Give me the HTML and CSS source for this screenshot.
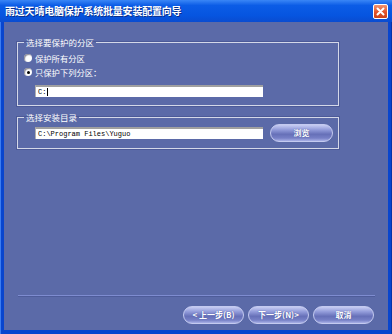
FILE: index.html
```html
<!DOCTYPE html>
<html>
<head>
<meta charset="utf-8">
<title>雨过天晴电脑保护系统批量安装配置向导</title>
<link rel="stylesheet" href="styles.css">
</head>
<body>
<div class="window">
	<div class="titlebar">
		<span class="title">雨过天晴电脑保护系统批量安装配置向导</span>
		<span class="close">
			<svg width="9" height="9" viewBox="0 0 9 9"><path d="M1.5 1.5L7.5 7.5M7.5 1.5L1.5 7.5" stroke="#fff" stroke-width="2" stroke-linecap="round"/></svg>
		</span>
	</div>
	<div class="client">
		<fieldset class="group group_part">
			<legend>选择要保护的分区</legend>
			<div class="radio_row"><span class="radio"></span>保护所有分区</div>
			<div class="radio_row"><span class="radio checked"></span>只保护下列分区：</div>
			<div class="input input_part">C:<span class="caret"></span></div>
		</fieldset>
		<fieldset class="group group_dir">
			<legend>选择安装目录</legend>
			<div class="dir_row">
				<div class="input">C:\Program Files\Yuguo</div>
				<span class="btn btn_browse">浏览</span>
			</div>
		</fieldset>
		<div class="spacer"></div>
		<div class="separator"></div>
		<div class="buttons">
			<span class="btn">&lt; 上一步(B)</span>
			<span class="btn">下一步(N)&gt;</span>
			<span class="btn">取消</span>
		</div>
	</div>
</div>
</body>
</html>
```
FILE: styles.css
```css
*{margin:0;padding:0;}
body{width:392px;height:334px;overflow:hidden;font-family:"Noto Sans CJK SC","Liberation Sans",sans-serif;}
.window{height:334px;display:flex;flex-direction:column;background:#0845CE;box-shadow:inset 1px 0 0 #3C7CF0,inset -1px 0 0 #0633A8;}
.titlebar{height:22px;display:flex;align-items:center;justify-content:space-between;padding:0 4px 0 5px;background:linear-gradient(#3A86F6,#0B5CE6 25%,#0655E0 70%,#0A4CD0);}
.title{color:#fff;font-size:10px;font-weight:bold;letter-spacing:-0.2px;text-shadow:1px 1px 0 #0A2E8A;line-height:12px;}
.close{width:13px;height:13px;border:1px solid #fff;border-radius:2px;background:linear-gradient(#F29470,#E2532A 55%,#C9421A);display:flex;align-items:center;justify-content:center;}
.client{flex:1;margin:0 4px 4px 4px;background:#5B6AA8;padding:15px 13px 6px 13px;display:flex;flex-direction:column;}
.group{width:322px;box-sizing:border-box;border:1px solid #D4D8E8;box-shadow:0 0 0 1px #4C5A98;padding:0 0 0 5px;color:#fff;}
.group legend{margin-left:1px;padding:0 2px;font-size:8.5px;line-height:10px;color:#fff;}
.group_part{padding-bottom:8px;}
.radio_row{height:14px;display:flex;align-items:center;font-size:8.3px;line-height:10px;}
.radio_row:first-of-type{margin-top:4px;}
.radio{width:8px;height:8px;border-radius:50%;background:radial-gradient(circle at 60% 60%,#fff 40%,#D0D0D8);box-shadow:inset 1px 1px 1px #8A8A96;margin:0 3px 0 1px;display:flex;align-items:center;justify-content:center;}
.radio.checked:after{content:"";width:3px;height:3px;border-radius:50%;background:#000;}
.input{width:228px;height:12px;box-sizing:border-box;background:#fff;border-top:2px solid #A0A0A0;border-left:1px solid #B0B0B0;font-family:"Liberation Mono",monospace;font-size:7px;line-height:10px;color:#000;padding-left:2px;display:flex;align-items:center;}
.input_part{margin:6px 0 0 12px;}
.caret{width:1px;height:8px;background:#000;margin-left:1px;}
.group_dir{margin-top:6px;padding-bottom:6px;}
.dir_row{display:flex;align-items:center;height:18px;margin-top:2px;padding-left:12px;}
.btn{width:61px;height:18px;box-sizing:border-box;border:1px solid #C4CAF0;border-radius:9px;background:linear-gradient(#C6CCF2,#929BDA 30%,#6670B8 58%,#7780C6 82%,#A8B0E6);color:#fff;font-size:8px;font-weight:bold;line-height:16px;text-align:center;text-shadow:0 0 1px #3A4490;display:inline-block;}
.btn_browse{width:63px;margin-left:7px;}
.spacer{flex:1;}
.separator{height:1px;background:#7E8CD0;box-shadow:0 1px 0 #4E5C9A;margin:0 0 0 1px;}
.buttons{display:flex;justify-content:flex-end;gap:4px;margin-top:10px;padding-right:1px;}
```
